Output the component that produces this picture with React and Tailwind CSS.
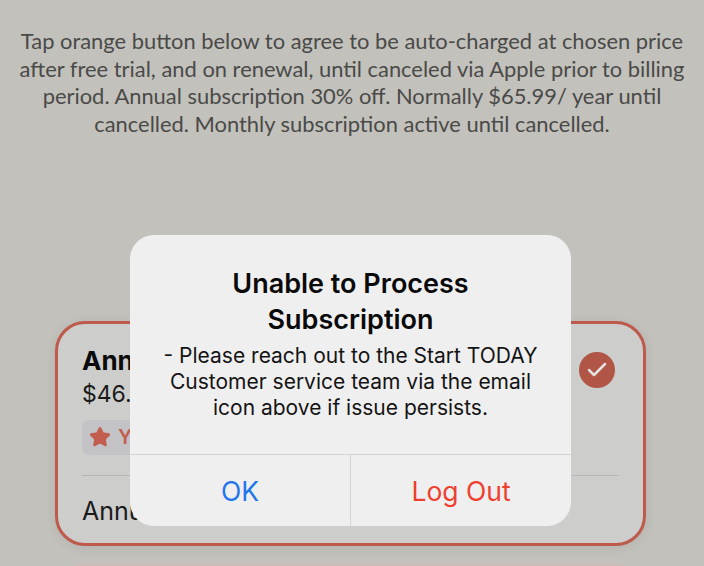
import React from 'react';
import { Star, Check } from 'lucide-react';

const sans = "font-['Inter','Liberation_Sans',sans-serif]";

const PlanCard = () => (
    <div className="ml-[55px] mr-[58px] mt-[183px] h-[225px] rounded-[30px] border-[3px] border-[#bd5a4c] bg-[#cdcdcc] shadow-[0_2px_12px_rgba(0,0,0,0.08)] pl-[24px] pr-[25px] pt-[20px] relative">
        <div className="flex justify-between items-start">
            <div>
                <p className={`${sans} text-[26px] leading-[34px] font-bold text-[#0a0a0a]`}>Annual</p>
                <p className={`${sans} text-[23px] leading-[32px] text-[#1a1a1a]`}>$46.19</p>
            </div>
            <div className="w-9 h-9 mt-[8px] mr-[3px] rounded-full bg-[#b15547] flex items-center justify-center">
                <Check size={24} strokeWidth={2.5} className="text-[#e4e2e0]" />
            </div>
        </div>
        <div className="mt-[10px] h-[35px] w-[200px] rounded-[8px] bg-[#c3c2c6] flex items-center gap-[7px] pl-[7px]">
            <Star size={22} className="text-[#c25f50] fill-[#c25f50]" />
            <span className={`${sans} text-[20px] font-semibold text-[#c25f50]`}>Your Plan</span>
        </div>
        <div className="mt-[20px] -mr-[1px] border-t border-[#b5b5b5]" />
        <p className={`${sans} mt-[18px] text-[25px] leading-[34px] text-[#1a1a1a]`}>Annual</p>
    </div>
);

const App = () => {
    return (
        <div className="relative w-[704px] h-[566px] overflow-hidden bg-[#c2c1bc]">
            <p className="pt-[27px] px-[10px] text-center font-['Lato',sans-serif] text-[21.9px] leading-[27.7px] text-[#4a4a48]">
                Tap orange button below to agree to be auto-charged at chosen price<br />
                after free trial, and on renewal, until canceled via Apple prior to billing<br />
                period. Annual subscription 30% off. Normally $65.99/ year until<br />
                cancelled. Monthly subscription active until cancelled.
            </p>
            <PlanCard />
            <div className="ml-[55px] mr-[58px] mt-[18px] h-[40px] rounded-t-[30px] bg-[#cdcdcc] border-t-[2px] border-[#cbbcb6]" />

            {/* alert sits over the plan card */}
            <div className="absolute left-[130px] top-[235px] w-[441px] h-[291px] rounded-[24px] bg-[#f0efef] flex flex-col overflow-hidden">
                <div className="flex-1 px-[20px] pt-[31px] text-center">
                    <h2 className={`${sans} text-[27px] leading-[36px] font-semibold text-[#0a0a0a]`}>
                        Unable to Process<br />Subscription
                    </h2>
                    <p className={`${sans} mt-[5px] text-[21px] leading-[26px] text-[#141414]`}>
                        - Please reach out to the Start TODAY<br />
                        Customer service team via the email<br />
                        icon above if issue persists.
                    </p>
                </div>
                <div className="h-[72px] flex border-t border-[#d5d4d4]">
                    <button className={`${sans} w-[221px] pt-[3px] border-r border-[#d5d4d4] text-[26.5px] text-[#2176ee]`}>OK</button>
                    <button className={`${sans} flex-1 pt-[3px] text-[26.5px] text-[#ee3f2f]`}>Log Out</button>
                </div>
            </div>
        </div>
    );
};

export default App;
